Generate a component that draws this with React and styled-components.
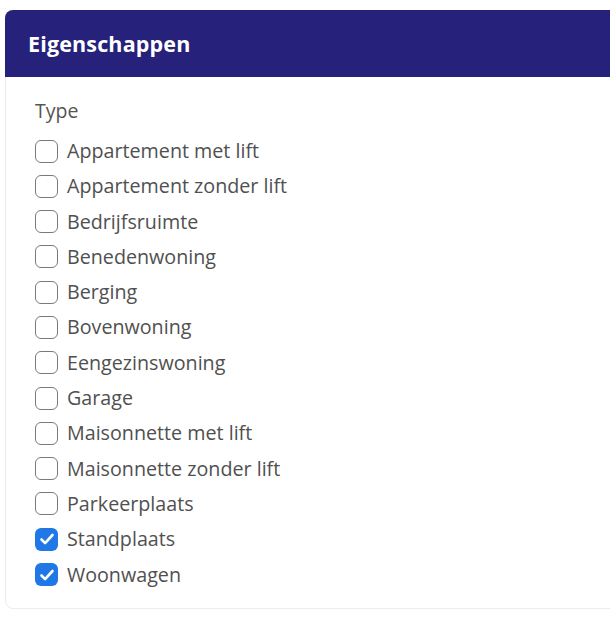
import React from "react"
import {useState} from "react"
import styled, {createGlobalStyle} from "styled-components"

const Global = createGlobalStyle`
body{
    margin: 0;
    background: #fff;
    font-family: "Open Sans", "Noto Sans", sans-serif;
}
`

const Page = styled.main`
padding: 10px 0 0 5px;
`

const Card = styled.section`
width: 620px;
border: 1px solid #ececec;
border-radius: 8px 0 0 8px;
background: #fff;
height: 599px;
box-sizing: border-box;
`

const Header = styled.header`
height: 67px;
background: #26217a;
border-radius: 8px 0 0 0;
margin: -1px -1px 0 -1px;
display: flex;
align-items: center;
padding-left: 23px;

h2{
    margin: 0;
    color: #fff;
    font-size: 21.5px;
    font-weight: 700;
    letter-spacing: 0.15px;
}
`

const Body = styled.div`
padding: 22px 0 0 29px;
`

const Label = styled.div`
color: #555;
font-size: 19.5px;
margin-bottom: 16px;
line-height: 24px;
`

const List = styled.ul`
list-style: none;
margin: 0;
padding: 0;
display: flex;
flex-direction: column;
gap: 11.3px;
`

const Row = styled.label`
display: flex;
align-items: center;
gap: 9px;
color: #505050;
font-size: 19.7px;
line-height: 24px;
cursor: pointer;
`

const Box = styled.span`
width: 23px;
height: 23px;
box-sizing: border-box;
border-radius: 6px;
border: ${p => p.$checked ? "none" : "1.7px solid #7a7a7a"};
background: ${p => p.$checked ? "#1f78e6" : "#fff"};
display: flex;
align-items: center;
justify-content: center;
flex-shrink: 0;
`

const types = [
    "Appartement met lift",
    "Appartement zonder lift",
    "Bedrijfsruimte",
    "Benedenwoning",
    "Berging",
    "Bovenwoning",
    "Eengezinswoning",
    "Garage",
    "Maisonnette met lift",
    "Maisonnette zonder lift",
    "Parkeerplaats",
    "Standplaats",
    "Woonwagen"
]

function App(){

    const [checked, setChecked] = useState(["Standplaats", "Woonwagen"])

    function toggle(name){
        setChecked(prev => prev.includes(name) ? prev.filter(n => n !== name) : [...prev, name])
    }

    return(
        <Page>
            <Global />
            <Card>
                <Header><h2>Eigenschappen</h2></Header>
                <Body>
                    <Label>Type</Label>
                    <List>
                        {types.map(t => {
                            const on = checked.includes(t)
                            return (
                                <li key={t}>
                                    <Row onClick={() => toggle(t)}>
                                        <Box $checked={on}>
                                            {on && (
                                                <svg width="18" height="18" viewBox="0 0 18 18">
                                                    <path d="M3.5 9.5l3.6 3.6L14.5 5" fill="none" stroke="#fff" strokeWidth="2.6" strokeLinecap="round" strokeLinejoin="round" />
                                                </svg>
                                            )}
                                        </Box>
                                        {t}
                                    </Row>
                                </li>
                            )
                        })}
                    </List>
                </Body>
            </Card>
        </Page>
    )
}

export default App
